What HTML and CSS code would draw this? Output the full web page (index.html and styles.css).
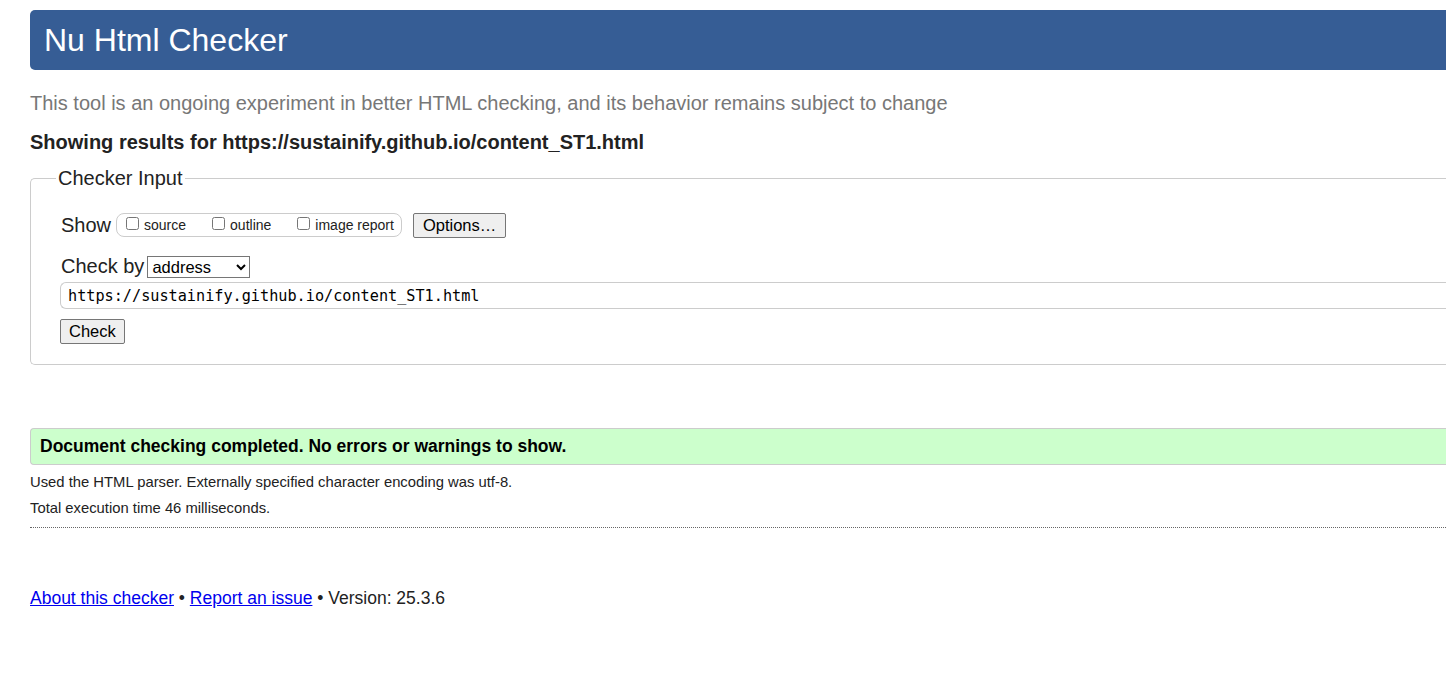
FILE: index.html
```html
<!DOCTYPE html>
<html lang="en">
<head>
<meta charset="utf-8">
<title>Nu Html Checker</title>
<link rel="stylesheet" href="styles.css">
</head>
<body>
<div class="page">
  <h1 class="banner">Nu Html Checker</h1>
  <p class="subtitle">This tool is an ongoing experiment in better HTML checking, and its behavior remains subject to change</p>
  <p class="results-for">Showing results for https://sustainify.github.io/content_ST1.html</p>

  <fieldset class="checker">
    <legend class="checker-legend">Checker Input</legend>
    <div class="row show-row">
      <span class="row-label">Show</span>
      <span class="pill">
        <label class="opt"><input type="checkbox" class="cb"> source</label>
        <label class="opt"><input type="checkbox" class="cb"> outline</label>
        <label class="opt"><input type="checkbox" class="cb"> image report</label>
      </span>
      <button type="button" class="btn">Options…</button>
    </div>
    <div class="row by-row">
      <span class="row-label">Check by</span>
      <select class="sel"><option>address</option></select>
    </div>
    <input type="text" class="url" value="https://sustainify.github.io/content_ST1.html">
    <div class="row check-row">
      <button type="button" class="btn">Check</button>
    </div>
  </fieldset>

  <p class="success">Document checking completed. No errors or warnings to show.</p>
  <p class="details">Used the HTML parser. Externally specified character encoding was utf-8.</p>
  <p class="details">Total execution time 46 milliseconds.</p>
  <hr class="dotted">

  <p class="footer"><a href="#">About this checker</a> • <a href="#">Report an issue</a> • Version: 25.3.6</p>
</div>
</body>
</html>
```

FILE: styles.css
```css
html, body {
  margin: 0;
  padding: 0;
  overflow: hidden;
  background: #fff;
}
body {
  font-family: "Liberation Sans", Arial, sans-serif;
  color: #222;
}
.page {
  width: 1460px;
  padding: 10px 0 0 30px;
}
.banner {
  margin: 0;
  height: 60px;
  line-height: 60px;
  padding-left: 14px;
  background: #365d95;
  color: #fff;
  font-weight: normal;
  font-size: 32px;
  border-radius: 5px 0 0 5px;
}
.subtitle {
  margin: 20px 0 0;
  font-size: 20px;
  line-height: 26px;
  color: #777;
}
.results-for {
  margin: 13px 0 0;
  font-size: 20px;
  line-height: 26px;
  font-weight: bold;
  color: #222;
}
.checker {
  margin: 12px 0 0;
  padding: 10px 0 20px 30px;
  border: 1px solid #ccc;
  border-right: none;
  border-radius: 5px 0 0 5px;
  min-width: 0;
}
.checker-legend {
  padding: 0 2px;
  margin-left: -5px;
  font-size: 20px;
  color: #222;
}
.row {
  display: flex;
  align-items: center;
}
.row-label {
  font-size: 20px;
  color: #222;
}
.show-row {
  margin-top: 12px;
  height: 26px;
}
.pill {
  display: inline-flex;
  align-items: center;
  height: 22px;
  margin-left: 5px;
  padding: 0 7px 0 6px;
  border: 1px solid #ccc;
  border-radius: 8px;
  gap: 23px;
}
.opt {
  font-size: 14px;
  display: inline-flex;
  align-items: center;
  color: #222;
}
.cb {
  width: 13px;
  height: 13px;
  margin: 0 5px 4px 3px;
}
.btn {
  font-family: "Liberation Sans", Arial, sans-serif;
  font-size: 16.5px;
  height: 25px;
  padding: 0 9px;
  border: 1px solid #767676;
  border-radius: 2px;
  background: #efefef;
  color: #000;
}
.show-row .btn {
  margin-left: 11px;
}
.by-row {
  margin-top: 17px;
}
.sel {
  font-family: "Liberation Sans", Arial, sans-serif;
  font-size: 16.5px;
  height: 22px;
  width: 103px;
  margin-left: 3px;
  border: 1px solid #767676;
  border-radius: 0;
  background: #fff;
  color: #000;
}
.url {
  display: block;
  box-sizing: border-box;
  width: 100%;
  height: 27px;
  margin: 4px 0 0 -1px;
  padding: 0 7px;
  border: 1px solid #ccc;
  border-right: none;
  border-radius: 6px 0 0 6px;
  font-family: "DejaVu Sans Mono", "Liberation Mono", monospace;
  font-size: 15.2px;
  color: #000;
}
.check-row {
  margin-top: 10px;
}
.check-row .btn {
  margin-left: -1px;
  padding: 0 8px;
}
.success {
  margin: 63px 0 0;
  padding: 0 0 0 9px;
  height: 35px;
  line-height: 35px;
  background: #ccffcc;
  border: 1px solid #ccc;
  border-right: none;
  border-radius: 4px 0 0 4px;
  font-size: 17.5px;
  font-weight: bold;
  color: #000;
}
.details {
  margin: 9px 0 0;
  font-size: 14.8px;
  line-height: 17px;
  color: #222;
}
.details + .details {
  margin-top: 9px;
}
.dotted {
  margin: 10px 0 0;
  border: none;
  border-top: 1px dotted #666;
  height: 0;
}
.footer {
  margin: 60px 0 0;
  font-size: 17.5px;
  color: #222;
}
.footer a {
  color: #00e;
}
```
